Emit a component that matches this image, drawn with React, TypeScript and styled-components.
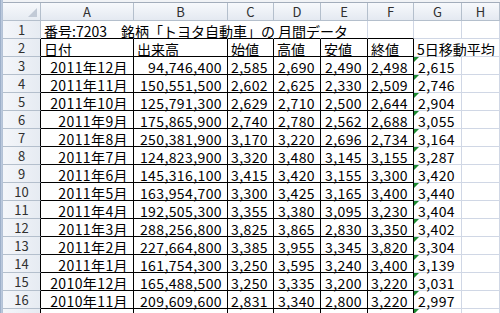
import React from "react";
import styled, { createGlobalStyle } from "styled-components";

const GlobalStyle = createGlobalStyle`
  html, body { margin: 0; padding: 0; background: #ffffff; overflow: hidden; }
  #root { width: 500px; height: 313px; overflow: hidden; }
`;

const GRID = "#d0d7e5";
const HEAD_BORDER = "#b4bfcc";
const BLACK = "#000000";

const Frame = styled.div`
  display: flex;
  width: 500px;
  height: 313px;
  overflow: hidden;
  font-family: "Noto Sans CJK JP", "Noto Sans", sans-serif;
`;

const LeftStrip = styled.div`
  width: 3px;
  flex: none;
  background: linear-gradient(to right, #8fa3c0, #c3d0e2 60%, #a9b8cd);
`;

const Sheet = styled.div`
  flex: 1;
  display: flex;
  flex-direction: column;
  min-width: 0;
`;

const TopBar = styled.div`
  height: 2px;
  flex: none;
  background: #f1f3f6;
  border-bottom: 1px solid #a3adbb;
`;

const Grid = styled.div`
  display: grid;
  grid-template-columns: 38px 93px 94px 46px 47px 47px 46px 48px 1fr;
  grid-auto-rows: 18px;
`;

const Corner = styled.div`
  position: relative;
  box-sizing: border-box;
  background: linear-gradient(#f7f9fc, #e6ebf2);
  border-right: 1px solid ${HEAD_BORDER};
  border-bottom: 1px solid ${HEAD_BORDER};
`;

const CornerMark = styled.span`
  position: absolute;
  right: 3px;
  bottom: 3px;
  width: 0;
  height: 0;
  border-left: 9px solid transparent;
  border-bottom: 9px solid #c2cad6;
`;

const ColHead = styled.div`
  box-sizing: border-box;
  background: linear-gradient(#f7f9fc, #e4e9f1);
  border-right: 1px solid ${HEAD_BORDER};
  border-bottom: 1px solid ${HEAD_BORDER};
  color: #303030;
  font-size: 13px;
  line-height: 13px;
  padding-top: 2px;
  text-align: center;
`;

const RowHead = styled.div<{ $edge: string }>`
  box-sizing: border-box;
  background: linear-gradient(to right, #f4f6fa, #e6ebf2);
  border-right: 1px solid ${(p) => p.$edge};
  border-bottom: 1px solid ${HEAD_BORDER};
  color: #303030;
  font-size: 13px;
  line-height: 13px;
  padding-top: 2px;
  text-align: center;
  overflow: hidden;
`;

const Cell = styled.div<{ $align: "left" | "right"; $right: string; $bottom: string; $pad?: number }>`
  position: relative;
  box-sizing: border-box;
  border-right: 1px solid ${(p) => p.$right};
  border-bottom: 1px solid ${(p) => p.$bottom};
  padding: 3px ${(p) => p.$pad ?? 5}px 0 3px;
  font-size: 14px;
  line-height: 14px;
  letter-spacing: ${(p) => (p.$align === "right" ? "0.4px" : "0")};
  color: #000;
  text-align: ${(p) => p.$align};
  white-space: nowrap;
  overflow: visible;
  z-index: ${(p) => (p.$align === "left" ? 1 : 0)};
`;

const Flag = styled.span`
  position: absolute;
  top: 0;
  left: 0;
  width: 0;
  height: 0;
  border-top: 5px solid #1b8a2f;
  border-right: 5px solid transparent;
`;

const COLS = ["A", "B", "C", "D", "E", "F", "G", "H"];

const DATA: string[][] = [
  ["2011年12月", "94,746,400", "2,585", "2,690", "2,490", "2,498", "2,615"],
  ["2011年11月", "150,551,500", "2,602", "2,625", "2,330", "2,509", "2,746"],
  ["2011年10月", "125,791,300", "2,629", "2,710", "2,500", "2,644", "2,904"],
  ["2011年9月", "175,865,900", "2,740", "2,780", "2,562", "2,688", "3,055"],
  ["2011年8月", "250,381,900", "3,170", "3,220", "2,696", "2,734", "3,164"],
  ["2011年7月", "124,823,900", "3,320", "3,480", "3,145", "3,155", "3,287"],
  ["2011年6月", "145,316,100", "3,415", "3,420", "3,155", "3,300", "3,420"],
  ["2011年5月", "163,954,700", "3,300", "3,425", "3,165", "3,400", "3,440"],
  ["2011年4月", "192,505,300", "3,355", "3,380", "3,095", "3,230", "3,404"],
  ["2011年3月", "288,256,800", "3,825", "3,865", "2,830", "3,350", "3,402"],
  ["2011年2月", "227,664,800", "3,385", "3,955", "3,345", "3,820", "3,304"],
  ["2011年1月", "161,754,300", "3,250", "3,595", "3,240", "3,400", "3,139"],
  ["2010年12月", "165,488,500", "3,250", "3,335", "3,200", "3,220", "3,031"],
  ["2010年11月", "209,609,600", "2,831", "3,340", "2,800", "3,220", "2,997"],
  ["", "", "", "", "", "", ""],
];

const HEADERS = ["日付", "出来高", "始値", "高値", "安値", "終値", "5日移動平均"];

export default function App() {
  return (
    <>
      <GlobalStyle />
      <Frame>
        <LeftStrip />
        <Sheet>
          <TopBar />
          <Grid>
            <Corner>
              <CornerMark />
            </Corner>
            {COLS.map((c) => (
              <ColHead key={c}>{c}</ColHead>
            ))}

            {/* Row 1 */}
            <RowHead $edge={HEAD_BORDER}>1</RowHead>
            <Cell $align="left" $right="transparent" $bottom={BLACK}>
              番号:7203　銘柄「トヨタ自動車」の 月間データ
            </Cell>
            <Cell $align="left" $right="transparent" $bottom={BLACK} />
            <Cell $align="left" $right="transparent" $bottom={BLACK} />
            <Cell $align="left" $right="transparent" $bottom={BLACK} />
            <Cell $align="left" $right={GRID} $bottom={BLACK} />
            <Cell $align="left" $right={GRID} $bottom={BLACK} />
            <Cell $align="left" $right={GRID} $bottom={GRID} />
            <Cell $align="left" $right={GRID} $bottom={GRID} />

            {/* Row 2 */}
            <RowHead $edge={BLACK}>2</RowHead>
            {HEADERS.map((h, i) => (
              <Cell
                key={h}
                $align="left"
                $right={i < 6 ? BLACK : "transparent"}
                $bottom={i < 6 ? BLACK : GRID}
              >
                {h}
              </Cell>
            ))}
            <Cell $align="left" $right={GRID} $bottom={GRID} />

            {/* Data rows */}
            {DATA.map((row, r) => (
              <React.Fragment key={r}>
                <RowHead $edge={BLACK}>{r + 3}</RowHead>
                {row.map((v, i) => (
                  <Cell
                    key={i}
                    $align="right"
                    $right={i < 6 ? BLACK : GRID}
                    $bottom={i < 6 ? BLACK : GRID}
                    $pad={i === 6 ? 6 : 5}
                  >
                    {i === 6 && <Flag />}
                    {v}
                  </Cell>
                ))}
                <Cell $align="right" $right={GRID} $bottom={GRID} />
              </React.Fragment>
            ))}
          </Grid>
        </Sheet>
      </Frame>
    </>
  );
}
